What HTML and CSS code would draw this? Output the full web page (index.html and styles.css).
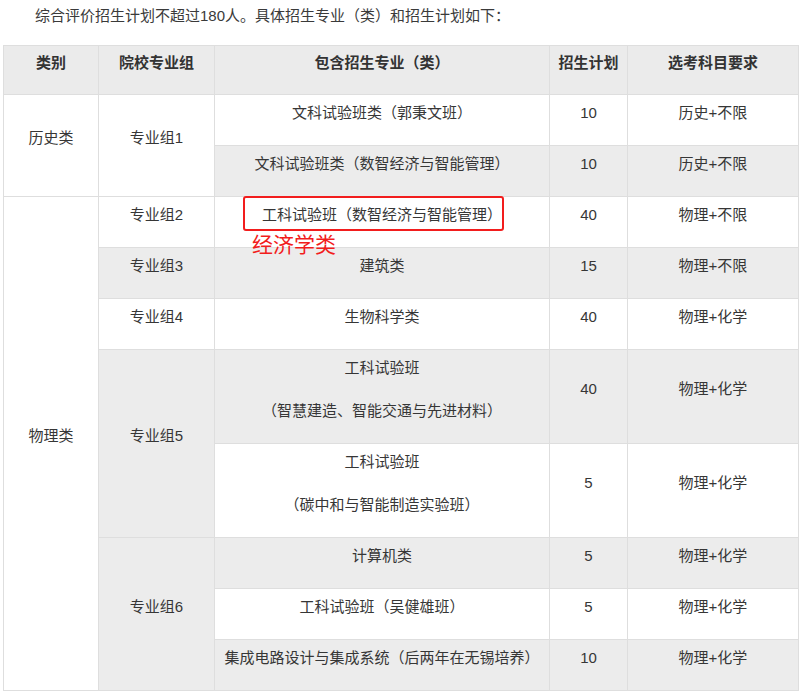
FILE: index.html
```html
<!DOCTYPE html>
<html lang="zh-CN">
<head>
<meta charset="utf-8">
<link rel="stylesheet" href="styles.css">
</head>
<body>
<div class="page">
  <p class="intro">综合评价招生计划不超过180人。具体招生专业（类）和招生计划如下：</p>
  <table class="plan">
    <colgroup>
      <col class="c1"><col class="c2"><col class="c3"><col class="c4"><col class="c5">
    </colgroup>
    <thead>
      <tr>
        <th><p>类别</p></th>
        <th><p>院校专业组</p></th>
        <th><p>包含招生专业（类）</p></th>
        <th><p>招生计划</p></th>
        <th><p>选考科目要求</p></th>
      </tr>
    </thead>
    <tbody>
      <tr>
        <td rowspan="2"><p>历史类</p></td>
        <td rowspan="2"><p>专业组1</p></td>
        <td><p>文科试验班类（郭秉文班）</p></td>
        <td><p>10</p></td>
        <td><p>历史+不限</p></td>
      </tr>
      <tr>
        <td><p>文科试验班类（数智经济与智能管理）</p></td>
        <td><p>10</p></td>
        <td><p>历史+不限</p></td>
      </tr>
      <tr>
        <td rowspan="8"><p>物理类</p></td>
        <td><p>专业组2</p></td>
        <td><p>工科试验班（数智经济与智能管理）</p></td>
        <td><p>40</p></td>
        <td><p>物理+不限</p></td>
      </tr>
      <tr>
        <td><p>专业组3</p></td>
        <td><p>建筑类</p></td>
        <td><p>15</p></td>
        <td><p>物理+不限</p></td>
      </tr>
      <tr>
        <td><p>专业组4</p></td>
        <td><p>生物科学类</p></td>
        <td><p>40</p></td>
        <td><p>物理+化学</p></td>
      </tr>
      <tr>
        <td rowspan="2"><p>专业组5</p></td>
        <td><p>工科试验班</p><p>（智慧建造、智能交通与先进材料）</p></td>
        <td><p>40</p></td>
        <td><p>物理+化学</p></td>
      </tr>
      <tr>
        <td><p>工科试验班</p><p>（碳中和与智能制造实验班）</p></td>
        <td><p>5</p></td>
        <td><p>物理+化学</p></td>
      </tr>
      <tr>
        <td rowspan="3"><p>专业组6</p></td>
        <td><p>计算机类</p></td>
        <td><p>5</p></td>
        <td><p>物理+化学</p></td>
      </tr>
      <tr>
        <td><p>工科试验班（吴健雄班）</p></td>
        <td><p>5</p></td>
        <td><p>物理+化学</p></td>
      </tr>
      <tr>
        <td><p>集成电路设计与集成系统（后两年在无锡培养）</p></td>
        <td><p>10</p></td>
        <td><p>物理+化学</p></td>
      </tr>
    </tbody>
  </table>
  <div class="mark-box"></div>
  <div class="mark-label">经济学类</div>
</div>
</body>
</html>
```

FILE: styles.css
```css
html, body {
  margin: 0;
  padding: 0;
  background: #ffffff;
}

body {
  font-family: "Liberation Sans", "Noto Sans CJK SC", sans-serif;
  font-size: 15px;
  color: #363636;
}

.page {
  position: relative;
  padding: 1px 0 0 3px;
  width: 795px;
}

.intro {
  margin: 0 0 14px 0;
  line-height: 30px;
  text-indent: 32px;
  color: #3a3a3a;
}

.plan {
  border-collapse: collapse;
  table-layout: fixed;
  width: 795px;
}

.c1 { width: 95px; }
.c2 { width: 116px; }
.c3 { width: 335px; }
.c4 { width: 78px; }
.c5 { width: 171px; }

.plan th,
.plan td {
  border: 1px solid #dedede;
  padding: 3.5px 8px 3.5px 8px;
  text-align: center;
  vertical-align: middle;
}

.plan thead th {
  padding: 3px 8px 2px 8px;
  background: #ebebeb;
  font-weight: bold;
  color: #333333;
}

.plan p {
  margin: 0 0 16px 0;
  line-height: 27px;
}

.plan tbody tr:nth-child(even) {
  background: #ececec;
}

.plan tbody tr:nth-child(odd) {
  background: #ffffff;
}

.mark-box {
  position: absolute;
  left: 243px;
  top: 196px;
  width: 257px;
  height: 31px;
  border: 2px solid #f21d1d;
  border-radius: 3px;
}

.mark-label {
  position: absolute;
  left: 252px;
  top: 230px;
  font-size: 21px;
  line-height: 30px;
  color: #f21d1d;
}
```
